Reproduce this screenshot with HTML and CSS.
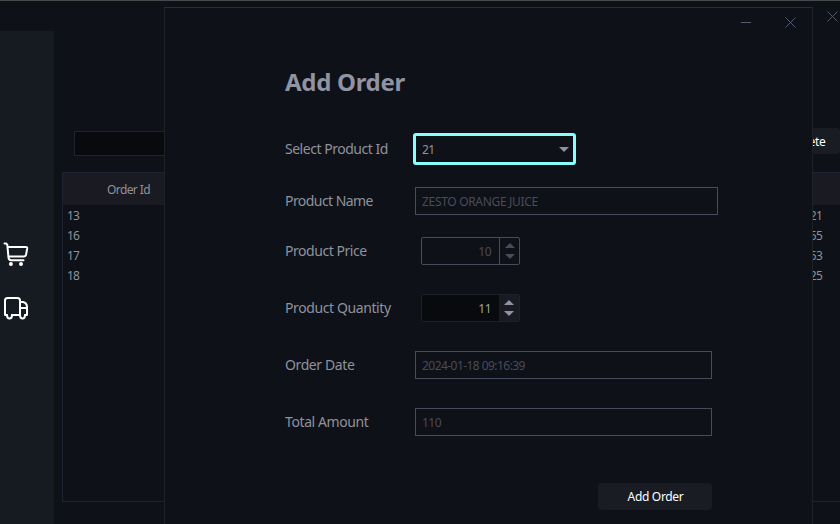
FILE: index.html
```html
<!DOCTYPE html>
<html lang="en">
<head>
<meta charset="utf-8">
<title>Add Order</title>
<link rel="stylesheet" href="styles.css">
</head>
<body>
<div class="window">
  <header class="topbar">
    <svg class="close" width="11" height="11" viewBox="0 0 11 11"><path d="M.5.5l10 10M10.5.5l-10 10"/></svg>
  </header>
  <div class="body">
    <nav class="sidebar">
      <svg width="26" height="26" viewBox="0 0 26 26"><path d="M1.500 1.400h1.600l1.200 1.200 1.200 13.100c.2 1.700 1 2.500 2.500 2.500H20.500M4.500 4.900h18.200c1 0 1.600.5 1.500 1.500l-1.100 6.100c-.3 1.400-1.100 2-2.400 2H5.500"/><circle cx="7.900" cy="22" r="2"/><circle cx="18" cy="22" r="2"/></svg>
      <svg width="26" height="26" viewBox="0 0 26 26"><path d="M4 19H2V4.500Q2 2 4.500 2h10Q17 2 17 4.500V19H9M17 6h3Q24 7 24 11V19h-2M17 12h7"/><path d="M4 19q0 3.500 2.500 3.500T9 19M17 19q0 3.500 2.500 3.500T22 19"/></svg>
    </nav>
    <main class="content">
      <div class="tools">
        <div class="search"></div>
        <button class="btn delete">Delete</button>
      </div>
      <div class="table">
        <div class="thead"><span>Order Id</span></div>
        <div class="tr"><span>13</span><span>21</span></div>
        <div class="tr"><span>16</span><span>55</span></div>
        <div class="tr"><span>17</span><span>53</span></div>
        <div class="tr"><span>18</span><span>25</span></div>
      </div>
    </main>
  </div>
</div>
<section class="dialog">
  <div class="controls">
    <svg width="11" height="11" viewBox="0 0 11 11"><path d="M0 5.500h10"/></svg>
    <svg width="11" height="11" viewBox="0 0 11 11"><path d="M.5.5l10 10M10.500.5l-10 10"/></svg>
  </div>
  <h1>Add Order</h1>
  <form class="form">
    <div class="row first"><label><span class="l1">Select Product Id</span></label><div class="combo"><span>21</span><i class="down"></i></div></div>
    <div class="row name"><label><span class="l2">Product Name</span></label><div class="field wide"><span class="v1">ZESTO ORANGE JUICE</span></div></div>
    <div class="row price"><label><span class="l3">Product Price</span></label><div class="spin disabled"><span class="num">10</span><span class="arrows"><i class="up"></i><i class="down"></i></span></div></div>
    <div class="row"><label>Product Quantity</label><div class="spin"><span class="num">11</span><span class="arrows"><i class="up"></i><i class="down"></i></span></div></div>
    <div class="row"><label>Order Date</label><div class="field"><span class="v2">2024-01-18 09:16:39</span></div></div>
    <div class="row"><label>Total Amount</label><div class="field"><span class="v3">110</span></div></div>
    <button type="button" class="btn submit">Add Order</button>
  </form>
</section>
</body>
</html>
```
FILE: styles.css
```css
* { box-sizing: border-box; }
body {
  margin: 0;
  height: 524px;
  overflow: hidden;
  position: relative;
  background: #0e1118;
  color: #8f929c;
  font: 12px/20px "Noto Sans", "Open Sans", sans-serif;
}
.window { height: 524px; display: flex; flex-direction: column; border-top: 1px solid #454a4b; }
.topbar { height: 30px; padding: 10px 2px 0 0; display: flex; justify-content: flex-end; flex: none; }
.topbar svg, .controls svg { fill: none; stroke: #555a70; stroke-width: 1; display: block; }
.body { flex: 1; display: flex; min-height: 0; }
.sidebar { width: 54px; background: #161b22; padding: 211px 0 0 3px; display: flex; flex-direction: column; gap: 28px; flex: none; }
.sidebar svg { fill: none; stroke: #fff; stroke-width: 2; stroke-linecap: round; stroke-linejoin: round; flex: none; }
.sidebar circle { fill: #fff; stroke: none; }
.content { flex: 1; padding: 97px 0 0 8px; min-width: 0; }
.tools { display: flex; justify-content: space-between; align-items: flex-start; height: 44px; padding-left: 12px; }
.search { width: 300px; height: 25px; margin-top: 3px; background: #090a0e; border: 1px solid #1f2230; }
.btn {
  border: 0;
  border-radius: 4px;
  background: #1a1c24;
  color: #fff;
  font: 12px/20px "Noto Sans", "Open Sans", sans-serif;
  letter-spacing: -.33px;
  padding: 0;
}
.delete { width: 76px; height: 26px; padding: 2px 14.500px 0 0; text-align: right; }
.table { height: 330px; border: 1px solid #1f2230; border-right: 0; }
.thead { height: 32px; background: #1a1a22; padding-left: 44px; line-height: 33px; margin-bottom: 1px; letter-spacing: -.6px; }
.tr { height: 20px; display: flex; justify-content: space-between; padding: 0 18px 0 4px; letter-spacing: -.8px; }
.dialog {
  position: absolute;
  left: 164px;
  top: 7px;
  width: 649px;
  height: 530px;
  background: #0e1118;
  border: 1px solid #1f2225;
  border-top-color: #2b2e35;
  padding-left: 120px;
}
.controls { display: flex; justify-content: flex-end; gap: 33px; height: 56px; padding: 9px 16px 0 0; }
h1 { margin: 0; height: 69px; font-size: 24px; line-height: 35px; letter-spacing: -.3px; color: #9093a2; font-weight: 700; }
.row { display: flex; height: 28px; margin-bottom: 29px; }
.first { height: 32px; margin-bottom: 22px; }
.name { margin-bottom: 22px; }
label { width: 130px; flex: none; font-size: 14px; line-height: 28px; letter-spacing: -.4px; white-space: nowrap; }
.first label { width: 128px; line-height: 32px; }
.combo {
  width: 163px;
  height: 32px;
  border: 3px solid #88ffff;
  border-radius: 3px;
  display: flex;
  align-items: center;
  justify-content: space-between;
  padding: 1px 4px 0 6px;
}
.field { width: 297px; border: 1px solid #494b5d; color: #494b5a; padding-left: 6px; line-height: 27px; }
.wide { width: 303px; }
.spin { width: 99px; margin-left: 6px; border: 1px solid #1f202a; border-radius: 2px; background: #090a0e; display: flex; }
.num { width: 77px; text-align: right; padding-right: 8px; line-height: 27px; color: #94a79b; }
.arrows { width: 20px; background: #1a1a22; color: #9093a2; display: flex; flex-direction: column; align-items: center; justify-content: center; gap: 6px; }
.disabled, .disabled .arrows { background: none; border-color: #494b5d; color: #494b5d; }
.disabled .num { color: #494b5a; }
.disabled .arrows { border-left: 1px solid #494b5d; }
i { width: 0; height: 0; border: 0 solid transparent; border-left-width: 5px; border-right-width: 5px; }
.up { border-bottom: 5px solid currentColor; }
.down { border-top: 5px solid currentColor; }
.submit { display: block; width: 114px; height: 27px; margin: 47px 0 0 313px; padding-left: 1px; }
.num, .combo span, .v2, .v3 { letter-spacing: -.55px; }
.v1 { letter-spacing: -.32px; }
.l1 { letter-spacing: -.48px; }
.l2 { letter-spacing: -.56px; }
.l3 { letter-spacing: -.46px; }
```
